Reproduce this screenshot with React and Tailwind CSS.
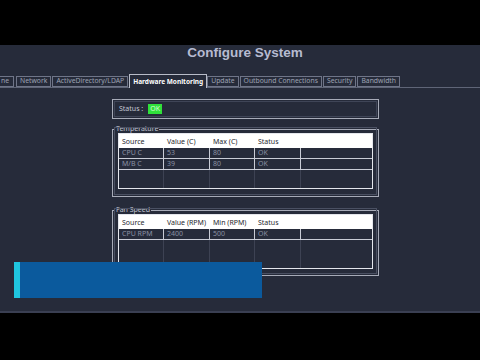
const tabs = [
  { name: "ne", cut: true },
  { name: "Network" },
  { name: "ActiveDirectory/LDAP" },
  { name: "Hardware Monitoring", active: true },
  { name: "Update" },
  { name: "Outbound Connections" },
  { name: "Security" },
  { name: "Bandwidth" },
];

const tempRows = [
  ["CPU C", "53", "80", "OK"],
  ["M/B C", "39", "80", "OK"],
];

const fanRows = [["CPU RPM", "2400", "500", "OK"]];

const widths = ["w-[45px]", "w-[46px]", "w-[45px]", "w-[46px]"];

function Grid({ headers, rows, height }) {
  return (
    <div
      className={`mx-[5px] flex flex-col border border-[#e4e6ec] bg-[#262b3a] ${height}`}
    >
      <div className="flex h-[14px] items-center bg-white text-[#26282e]">
        {headers.map((h, i) => (
          <div key={i} className={`${widths[i]} pl-[3px] leading-none`}>
            {h}
          </div>
        ))}
        <div className="flex-1" />
      </div>
      {rows.map((r, ri) => (
        <div
          key={ri}
          className="flex h-[11px] items-center border-b border-[#c9ccd6] text-[#8a90a3]"
        >
          {r.map((c, i) => (
            <div
              key={i}
              className={`${widths[i]} h-full border-r border-[#c9ccd6] pl-[3px] leading-[10px]`}
            >
              {c}
            </div>
          ))}
          <div className="flex-1" />
        </div>
      ))}
      <div className="flex flex-1">
        {widths.map((w, i) => (
          <div key={i} className={`${w} h-full border-r border-[#3d4253]`} />
        ))}
        <div className="flex-1" />
      </div>
    </div>
  );
}

function Group({ label, children, className }) {
  return (
    <fieldset
      className={`border border-[#a7abb8] px-0 pb-[5px] pt-0 outline outline-1 -outline-offset-[3px] outline-[#4a5062] ${className}`}
    >
      <legend className="ml-[2px] px-[1px] text-[7px] leading-[8px] text-[#c4c8d4]">
        {label}
      </legend>
      {children}
    </fieldset>
  );
}

export default function App() {
  return (
    <div
      className="flex h-[360px] w-[480px] flex-col overflow-hidden bg-black text-[7px]"
      style={{ fontFamily: '"Noto Sans", "Open Sans", sans-serif' }}
    >
      <div className="h-[45px] shrink-0" />
      <div className="relative flex h-[268px] shrink-0 flex-col border-b-2 border-[#3a3f52] bg-[#262b3a]">
        <h1
          className="mt-[1px] h-[14px] pl-[10px] text-center text-[13.5px] font-bold leading-[14px] text-[#b7bbd1]"
          style={{ fontFamily: '"Liberation Sans", Arial, sans-serif' }}
        >
          Configure System
        </h1>

        <div className="mt-[14px] flex h-[14px] items-end border-b border-[#5f6577] text-[6.8px]">
          {tabs.map((t, i) => (
            <div
              key={i}
              className={
                t.active
                  ? "-mb-px flex h-[14px] items-center border border-b-0 border-[#b8bcc8] bg-[#262b3a] px-[3px] text-[6.5px] font-bold text-white"
                  : t.cut
                  ? "-ml-[3px] mr-[2px] flex h-[11px] items-center border border-[#6f7588] pl-[3px] pr-[4px] text-[#9ea3b4]"
                  : "mr-[1px] flex h-[11px] items-center border border-[#6f7588] px-[3px] text-[#9ea3b4]"
              }
            >
              {t.name}
            </div>
          ))}
        </div>

        <div className="ml-[112px] mt-[11px] flex w-[267px] flex-col">
          <div className="flex h-[20px] items-center gap-[3px] border border-[#a7abb8] pl-[6px] text-[#c4c8d4] outline outline-1 -outline-offset-[3px] outline-[#3f4557]">
            <span>Status :</span>
            <span className="ml-[2px] flex h-[10px] items-center bg-[#2fe03a] px-[2px] text-[#d8ffd8]">
              OK
            </span>
          </div>

          <Group label="Temperature" className="mt-[6px] h-[72px]">
            <Grid
              headers={["Source", "Value (C)", "Max (C)", "Status"]}
              rows={tempRows}
              height="h-[56px]"
            />
          </Group>

          <Group label="Fan Speed" className="mt-[9px] h-[70px]">
            <Grid
              headers={["Source", "Value (RPM)", "Min (RPM)", "Status"]}
              rows={fanRows}
              height="h-[55px]"
            />
          </Group>
        </div>

        <div className="absolute left-[14px] top-[217px] h-[36px] w-[248px] border-l-[6px] border-[#1fc6df] bg-[#0b5a9d]" />
      </div>
      <div className="flex-1" />
    </div>
  );
}
